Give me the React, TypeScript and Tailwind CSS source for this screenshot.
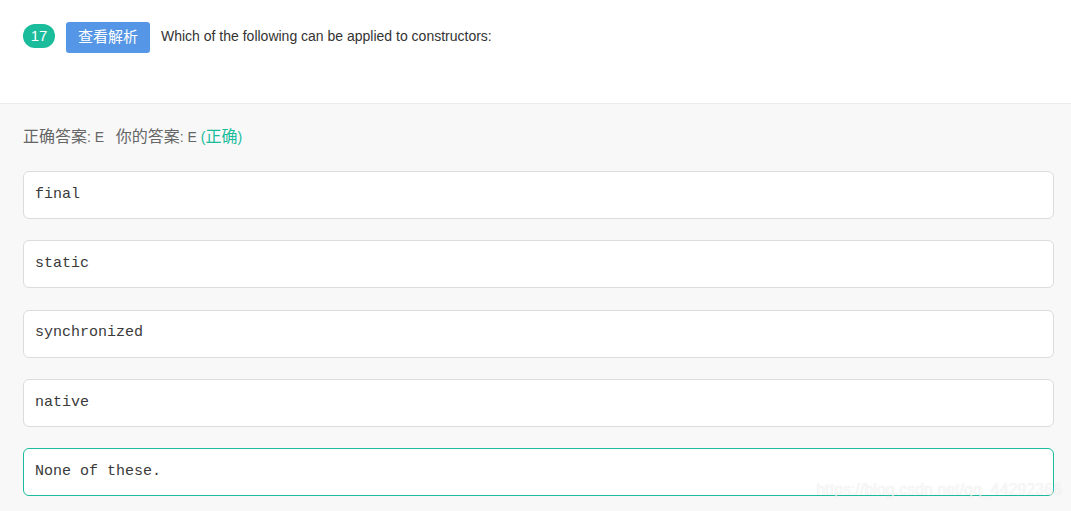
const options = ["final", "static", "synchronized", "native", "None of these."];

export default function App() {
  return (
    <main className="relative min-h-screen bg-[#f8f8f8] font-['Liberation_Sans','Noto_Sans_CJK_SC',sans-serif]">
      <header className="flex h-[104px] items-start gap-[11px] border-b border-[#ececec] bg-white px-[23px] pt-[22px]">
        <span className="mt-[2px] flex h-[24px] w-[32px] items-center justify-center rounded-full bg-[#1abc9c] text-[15px] text-white">17</span>
        <button className="h-[31px] w-[84px] rounded-[3px] bg-[#5596e6] text-[15px] text-white">查看解析</button>
        <p className="pt-[4px] text-[14px] text-[#333]">Which of the following can be applied to constructors:</p>
      </header>
      <section className="pl-[23px] pr-[17px] pt-[23px]">
        <p className="h-[20px] text-[14px] leading-[20px] text-[#666]">
          <span className="text-[16px]">正确答案</span>: E&nbsp;&nbsp;&nbsp;<span className="text-[16px]">你的答案</span>: E{" "}
          <span className="text-[#1abc9c]">
            (<span className="text-[16px]">正确</span>)
          </span>
        </p>
        <div className="mt-[24px] flex flex-col gap-[21.25px]">
          {options.map((o, i) => (
            <div
              key={o}
              className={
                "flex h-[48px] items-center rounded-[6px] border bg-white px-[11px] font-['Liberation_Mono',monospace] text-[15px] text-[#3a3a3a] " +
                (i === options.length - 1 ? "border-[#1abc9c]" : "border-[#dcdcdc]")
              }
            >
              {o}
            </div>
          ))}
        </div>
      </section>
      <span className="absolute bottom-[9px] right-[9px] text-[16px] text-white/80 [text-shadow:0_0_1px_rgba(0,0,0,0.15)]">https://blog.csdn.net/qq_44292366</span>
    </main>
  );
}
